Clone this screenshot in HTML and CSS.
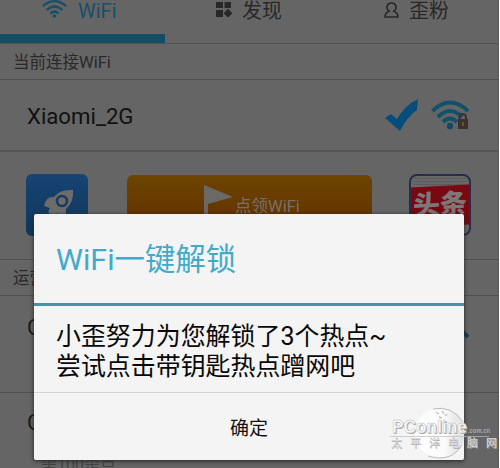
FILE: index.html
```html
<!DOCTYPE html>
<html lang="zh-CN">
<head>
<meta charset="utf-8">
<title>WiFi</title>
<link rel="stylesheet" href="styles.css">
</head>
<body>
<div class="screen">
  <nav class="tabs">
    <div class="tab active">
      <svg class="tab-wifi" width="25" height="18" viewBox="0 0 25 18" fill="none" stroke="currentColor" stroke-width="2.2"><path d="M.8 6.2Q12.5-3.8 24.2 6.2M4.600 10Q12.500 3 20.400 10M8.200 13.500Q12.500 9.500 16.800 13.500"/><circle cx="12.5" cy="16" r="1.7" fill="currentColor" stroke="none"/></svg>
      <span>WiFi</span>
    </div>
    <div class="tab find">
      <svg width="17" height="17" viewBox="0 0 17 17" fill="currentColor"><path d="M0 1h7v6H0zM8.500 1h6.500v6H8.500zM0 9h7v7H0zM12 7.8l4.400 4.400-4.400 4.400-4.400-4.400z"/></svg>
      <span>发现</span>
    </div>
    <div class="tab fans">
      <svg width="15" height="17" viewBox="0 0 15 17" fill="none" stroke="currentColor" stroke-width="1.6"><path d="M5.200 9.200C1.200 6 3 1 7.500 1s6.300 5 2.300 8.200c3 1 4.200 2.800 4.200 5.800H1c0-3 1.200-4.800 4.200-5.800z"/></svg>
      <span>歪粉</span>
    </div>
  </nav>
  <h2 class="section first">当前连接WiFi</h2>
  <div class="network">
    <span>Xiaomi_2G</span>
    <svg class="check" width="34" height="33" viewBox="0 0 34 33"><path d="M0 19l6-4 6 5Q20 6 33 0L32 11Q22 18 15 32z" fill="#074d7b"/></svg>
    <svg width="39" height="30" viewBox="0 0 39 30" fill="none" stroke="#12516a" stroke-width="4"><path d="M1.500 11Q19-6 37 11M7 17Q19 5 31 17M12 22Q19 15 26 22"/><circle cx="19" cy="26" r="3.200" fill="#124968" stroke="none"/><path d="M28.500 20v-3q0-3 3.200-3t3.200 3v3" stroke="#3d302d" stroke-width="2"/><path d="M27 19h10v10H27z" fill="#3d302d" stroke="none"/><path d="M32 22v4" stroke="#6d5d58" stroke-width="1.500"/></svg>
  </div>
  <div class="promos">
    <div class="rocket"><svg width="62" height="62" viewBox="0 0 62 62"><path d="M47 16Q34 15 28 23Q20 22 18 32L24 34 22 38 27 43 31 39 33 46Q41 43 40 35Q48 28 47 16z" fill="#6c6c6c"/><circle cx="36" cy="27" r="5" fill="#6c6c6c" stroke="#173b60" stroke-width="2.500"/></svg></div>
    <div class="claim">
      <svg width="30" height="34" viewBox="0 0 30 34"><path d="M0 0l29 12L4 19v15H0z" fill="#6b6965"/></svg>
      <span>点领WiFi</span>
    </div>
    <div class="news"><div class="newsprint"></div><div class="headline">头条</div></div>
  </div>
  <h2 class="section">运营商热点</h2>
  <div class="hotspot"><span>C</span><svg width="34" height="25" viewBox="0 0 34 25"><path d="M8 8Q20 9 32 22" stroke="#0c3b58" stroke-width="4" fill="none"/></svg></div>
  <div class="hotspot last"><span>C</span><small>需100歪点</small></div>
</div>
<section class="dialog">
  <h1>WiFi一键解锁</h1>
  <p>小歪努力为您解锁了3个热点~<br>尝试点击带钥匙热点蹭网吧</p>
  <button>确定</button>
</section>
<svg class="watermark" width="110" height="62" viewBox="0 0 110 62">
  <defs><linearGradient id="globe" x1="0" y1="0" x2="1" y2="0"><stop stop-color="#fff" stop-opacity=".8"/><stop offset=".6" stop-color="#fff" stop-opacity=".65"/><stop offset="1" stop-color="#bbb" stop-opacity=".25"/></linearGradient></defs>
  <circle cx="50" cy="27" r="25" fill="url(#globe)"/>
  <path d="M43 3Q62-1 73 16M38 50Q61 57 72 39" fill="none" stroke="#bbb" stroke-width="1"/>
  <path d="M46 6l3 2M52 5l2 3M57 8l-2 2M49 11l3 1" stroke="#c5c5c5" stroke-width="1.500"/>
  <text class="brand shadow" x="3" y="28" textLength="75" lengthAdjust="spacingAndGlyphs">PConline</text>
  <text class="brand" x="2" y="27" textLength="75" lengthAdjust="spacingAndGlyphs">PConline</text>
  <text class="domain" x="78" y="27" textLength="22" lengthAdjust="spacingAndGlyphs">.com.cn</text>
  <path d="M0 30.500h99" stroke="#bbb" stroke-width=".7"/>
  <text class="slogan shadow" x="1.500" y="41.500" textLength="106">太平洋电脑网</text>
  <text class="slogan" x="1" y="41" textLength="106">太平洋电脑网</text>
</svg>
</body>
</html>
```
FILE: styles.css
```css
* { box-sizing: border-box; }
body {
  margin: 0;
  position: relative;
  width: 500px;
  height: 468px;
  overflow: hidden;
  background: #fff;
  color: #181818;
  font-family: Roboto, "Noto Sans CJK SC", sans-serif;
}
h1, h2, p { margin: 0; font-weight: 400; }
.screen { width: 499px; height: 468px; background: #656565; border-right: 1px solid #5b5b5b; overflow: hidden; }
.tabs { display: grid; grid-template-columns: 165px 167px 1fr; height: 44px; border-bottom: 1px solid #525252; font-size: 20px; line-height: 22px; color: #282828; }
.tab { display: flex; align-items: flex-start; height: 43px; }
.tab svg { flex: none; }
.active { padding-left: 42px; gap: 11px; color: #174f67; border-bottom: 9px solid #154d64; }
.find { padding-left: 51px; gap: 9px; }
.find svg { margin-top: 1px; }
.fans { padding-left: 52px; gap: 10px; }
.fans svg { margin-top: 2px; }
.section { height: 36px; padding-left: 13px; border-bottom: 1px solid #505050; font-size: 16.500px; line-height: 37px; color: #292929; }
.network { display: flex; align-items: center; height: 72px; padding: 0 28px 0 27px; border-bottom: 2px solid #555; font-size: 22.200px; color: #111; }
.network span { padding-top: 2px; }
.check { margin: 0 12px 0 auto; }
.promos { display: flex; align-items: flex-start; height: 108px; padding: 22px 26px 0 26px; border-bottom: 1px solid #505050; }
.rocket { width: 62px; height: 62px; border-radius: 6px; background: linear-gradient(#164474, #123558); }
.claim { display: flex; width: 245px; height: 62px; margin: 1px 37px 0 39px; padding: 10px 0 0 77px; border-radius: 6px; background: linear-gradient(#6c4500, #653500 65%, #5d3000); color: #777069; font-size: 16.500px; }
.claim span { margin: 11px 0 0 1px; line-height: 22px; white-space: nowrap; }
.news { width: 62px; height: 62px; border: 2px solid #272d4d; border-radius: 8px; overflow: hidden; background: #686868; }
.newsprint { height: 8px; margin: 2px 3px 0; background: repeating-linear-gradient(#5b5b5b 0 1px, #686868 1px 3px); }
.headline { height: 40px; background: #780912; color: #7f7777; font-size: 27px; font-weight: 900; line-height: 38px; text-align: center; white-space: nowrap; transform: skewY(-3deg); }
.hotspot { display: flex; justify-content: space-between; height: 97px; padding: 19px 28px 0 27px; border-bottom: 1px solid #505050; font-size: 22px; line-height: 26px; }
.last { flex-direction: column; justify-content: flex-start; height: 76px; padding-top: 17px; border-bottom: 0; }
.last small { margin: 19px 0 0 14px; font-size: 16px; line-height: 20px; color: #444; }
.dialog { position: absolute; left: 34px; top: 214px; width: 430px; height: 246px; border-radius: 2px; background: #f4f4f4; box-shadow: 0 1px 4px #222; overflow: hidden; color: #080808; }
.dialog h1 { height: 92px; padding-left: 22px; border-bottom: 3px solid #4395a5; font-size: 30.400px; line-height: 91px; color: #42aac9; }
.dialog p { height: 86px; padding: 16px 0 0 22px; font-size: 24.950px; line-height: 29.500px; white-space: nowrap; }
.dialog button { display: block; width: 100%; height: 68px; padding: 0; border: 0; border-top: 1px solid #d4d4d4; background: transparent; color: #111; font: 19px Roboto, "Noto Sans CJK SC", sans-serif; }
.watermark { position: absolute; left: 390px; top: 406px; }
.brand { font: bold 19px "Liberation Sans", sans-serif; fill: #f6f6f6; stroke: #bbb; stroke-width: .4; }
.domain { font: bold 7px "Liberation Sans", sans-serif; fill: #aaa; }
.slogan { font: 11px "Noto Sans CJK SC", sans-serif; fill: #e0e0e0; stroke: #bbb; stroke-width: .2; }
.shadow { fill: #aaa; stroke: none; }
```
